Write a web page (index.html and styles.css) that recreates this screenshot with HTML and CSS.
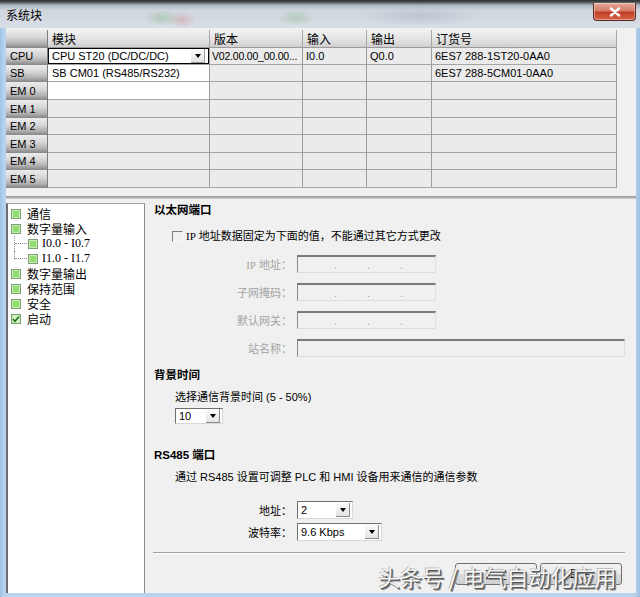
FILE: index.html
```html
<!DOCTYPE html>
<html lang="zh-CN">
<head>
<meta charset="utf-8">
<title>系统块</title>
<link rel="stylesheet" href="styles.css">
</head>
<body>
<div class="window">
  <div class="titlebar">
    <span class="title">系统块</span>
    <div class="close"><svg width="14" height="10" viewBox="0 0 14 10"><path d="M3 1.5 L11 8.5 M11 1.5 L3 8.5" stroke="#fff" stroke-width="2.4" stroke-linecap="round"/></svg></div>
  </div>
  <div class="client">
    <div class="grid-wrap">
      <div class="grid">
        <div class="cell rh"></div><div class="cell ch">模块</div><div class="cell ch">版本</div><div class="cell ch">输入</div><div class="cell ch">输出</div><div class="cell ch">订货号</div>

        <div class="cell rh">CPU</div>
        <div class="cell white combo-cell"><div class="combo"><span class="combo-text">CPU ST20 (DC/DC/DC)</span><span class="drop"><i class="tri"></i></span></div></div>
        <div class="cell narrow">V02.00.00_00.00...</div><div class="cell">I0.0</div><div class="cell">Q0.0</div><div class="cell">6ES7 288-1ST20-0AA0</div>

        <div class="cell rh">SB</div>
        <div class="cell white">SB CM01 (RS485/RS232)</div>
        <div class="cell"></div><div class="cell"></div><div class="cell"></div><div class="cell">6ES7 288-5CM01-0AA0</div>

        <div class="cell rh">EM 0</div>
        <div class="cell white"></div>
        <div class="cell"></div><div class="cell"></div><div class="cell"></div><div class="cell"></div>

        <div class="cell rh">EM 1</div><div class="cell"></div><div class="cell"></div><div class="cell"></div><div class="cell"></div><div class="cell"></div>
        <div class="cell rh">EM 2</div><div class="cell"></div><div class="cell"></div><div class="cell"></div><div class="cell"></div><div class="cell"></div>
        <div class="cell rh">EM 3</div><div class="cell"></div><div class="cell"></div><div class="cell"></div><div class="cell"></div><div class="cell"></div>
        <div class="cell rh">EM 4</div><div class="cell"></div><div class="cell"></div><div class="cell"></div><div class="cell"></div><div class="cell"></div>
        <div class="cell rh">EM 5</div><div class="cell"></div><div class="cell"></div><div class="cell"></div><div class="cell"></div><div class="cell"></div>
      </div>
    </div>
    <div class="splitter"></div>
    <div class="lower">
      <div class="tree">
        <div class="item"><span class="ico"></span><span class="lbl">通信</span></div>
        <div class="item"><span class="ico"></span><span class="lbl">数字量输入</span></div>
        <div class="item sub"><span class="elbow"></span><span class="ico"></span><span class="lbl serif">I0.0 - I0.7</span></div>
        <div class="item sub last"><span class="elbow"></span><span class="ico"></span><span class="lbl serif">I1.0 - I1.7</span></div>
        <div class="item"><span class="ico"></span><span class="lbl">数字量输出</span></div>
        <div class="item"><span class="ico"></span><span class="lbl">保持范围</span></div>
        <div class="item"><span class="ico"></span><span class="lbl">安全</span></div>
        <div class="item"><span class="ico checked"><svg width="8" height="8" viewBox="0 0 8 8"><path d="M1 4 L3 6.3 L7 1.5" stroke="#1f6b1f" stroke-width="1.6" fill="none"/></svg></span><span class="lbl">启动</span></div>
      </div>
      <div class="pane">
        <div class="heading">以太网端口</div>
        <div class="chkrow"><span class="chk"></span><span class="chk-text"><span class="serif">IP</span> 地址数据固定为下面的值，不能通过其它方式更改</span></div>
        <div class="field f-first"><span class="flabel dis"><span class="serif">IP</span> 地址：</span><div class="ibox"><span>.</span><span>.</span><span>.</span></div></div>
        <div class="field"><span class="flabel dis">子网掩码：</span><div class="ibox"><span>.</span><span>.</span><span>.</span></div></div>
        <div class="field"><span class="flabel dis">默认网关：</span><div class="ibox"><span>.</span><span>.</span><span>.</span></div></div>
        <div class="field"><span class="flabel dis">站名称：</span><div class="ibox wide"></div></div>

        <div class="heading h-bg">背景时间</div>
        <div class="indent t-sel">选择通信背景时间 (5 - 50%)</div>
        <div class="sel sel-10 indent"><span class="sel-text">10</span><span class="sbtn"><i class="tri"></i></span></div>

        <div class="heading h-rs">RS485 端口</div>
        <div class="indent t-desc">通过 RS485 设置可调整 PLC 和 HMI 设备用来通信的通信参数</div>
        <div class="field f-addr"><span class="flabel">地址：</span><div class="sel sel-addr"><span class="sel-text">2</span><span class="sbtn"><i class="tri"></i></span></div></div>
        <div class="field f-baud"><span class="flabel">波特率：</span><div class="sel sel-baud"><span class="sel-text">9.6 Kbps</span><span class="sbtn"><i class="tri"></i></span></div></div>

        <div class="sep"></div>
        <div class="buttons">
          <div class="btn">确定</div>
          <div class="btn">取消</div>
        </div>
      </div>
    </div>
  </div>
  <div class="watermark">头条号 / 电气自动化应用</div>
</div>
</body>
</html>
```

FILE: styles.css
```css
html, body {
  margin: 0;
  padding: 0;
}
body {
  font-family: "Liberation Sans", "Noto Sans CJK SC", sans-serif;
  font-size: 11px;
  color: #000;
  background: #a9c8e6;
}
.serif {
  font-family: "Liberation Serif", "Noto Sans CJK SC", serif;
}
.window {
  width: 640px;
  height: 597px;
  position: relative;
  overflow: hidden;
  display: flex;
  flex-direction: column;
  background: linear-gradient(to right, #9fc2e4 0, #b7d3ee 4px, #b7d3ee 634px, #9fc2e4 640px);
}
.titlebar {
  height: 28px;
  flex: none;
  display: flex;
  align-items: flex-start;
  background:
    radial-gradient(ellipse 18px 8px at 162px 18px, rgba(110,170,110,0.35), transparent),
    radial-gradient(ellipse 14px 8px at 182px 20px, rgba(200,110,110,0.30), transparent),
    radial-gradient(ellipse 20px 8px at 296px 18px, rgba(110,170,110,0.30), transparent),
    radial-gradient(ellipse 60px 10px at 420px 16px, rgba(120,140,170,0.25), transparent),
    linear-gradient(to bottom, #2e2e2e 0, #4a4e52 2px, #aab3bc 5px, #cfd6dd 10px, #d8dee5 100%);
}
.title {
  margin: 7px 0 0 6px;
  font-size: 12px;
  line-height: 16px;
  font-family: "Noto Sans CJK SC", sans-serif;
}
.close {
  margin: 3px 4px 0 auto;
  width: 43px;
  height: 18px;
  box-sizing: border-box;
  border: 1px solid #5a2a22;
  border-top: none;
  border-radius: 0 0 4px 4px;
  background: linear-gradient(to bottom, #e9a99b 0, #d47a68 45%, #c33e25 55%, #d5664b 100%);
  display: flex;
  align-items: center;
  justify-content: center;
  box-shadow: inset 0 0 0 1px rgba(255,255,255,0.35);
}
.client {
  flex: 1;
  min-height: 0;
  margin: 0 4px 4px 6px;
  background: #f0f0f0;
  display: flex;
  flex-direction: column;
}
.grid-wrap {
  padding: 2px 0 8px 0;
}
.grid {
  display: grid;
  width: 611px;
  grid-template-columns: 42px 162px 93px 64px 65px 185px;
  grid-template-rows: 18px 17px 17px 18px 18px 17px 18px 17px 18px;
  background: #ebebeb;
}
.cell {
  box-sizing: border-box;
  border-right: 1px solid #9c9c9c;
  border-bottom: 1px solid #a4a4a4;
  background: #ebebeb;
  padding-left: 3px;
  display: flex;
  align-items: center;
  white-space: nowrap;
  overflow: hidden;
  font-size: 11px;
}
.cell.narrow {
  font-size: 10.5px;
  letter-spacing: -0.2px;
  padding-left: 2px;
}
.ch {
  background: linear-gradient(to bottom, #f2f2f2 0, #e2e2e2 60%, #cfcfcf 100%);
  border-right: 1px solid #a8a8a8;
  border-bottom: 1px solid #9a9a9a;
  font-family: "Noto Sans CJK SC", sans-serif;
  font-size: 12px;
  padding-left: 4px;
}
.rh {
  background: linear-gradient(to bottom, #ececec 0, #d6d6d6 45%, #b0b0b0 80%, #8f8f8f 100%);
  border-right: 1px solid #7d7d7d;
  border-bottom: 1px solid #8a8a8a;
  padding-left: 4px;
  font-size: 11px;
}
.white {
  background: #fff;
  padding-left: 4px;
}
.combo-cell {
  padding: 0;
}
.combo {
  flex: 1;
  height: 100%;
  box-sizing: border-box;
  border: 1px solid #000;
  display: flex;
  align-items: center;
  padding-left: 3px;
}
.combo-text {
  flex: 1;
}
.drop {
  width: 13px;
  height: 13px;
  margin-right: 3px;
  display: flex;
  align-items: center;
  justify-content: center;
  background: linear-gradient(#fbfbfb, #e2e2e2);
  border-right: 1px solid #9a9a9a;
  border-bottom: 1px solid #9a9a9a;
}
.tri {
  display: block;
  width: 0;
  height: 0;
  border-left: 3.5px solid transparent;
  border-right: 3.5px solid transparent;
  border-top: 4px solid #000;
}
.splitter {
  height: 3px;
  flex: none;
  background: linear-gradient(to bottom, #9a9a9a, #b8b8b8 66%, #d8d8d8);
}
.lower {
  flex: 1;
  min-height: 0;
  display: flex;
  padding-top: 4px;
}
.tree {
  width: 139px;
  flex: none;
  box-sizing: border-box;
  background: #fff;
  border-left: 2px solid #6e6e6e;
  border-top: 1px solid #a0a0a0;
  border-right: 1px solid #8c8c8c;
  padding: 2px 0 0 3px;
  font-family: "Noto Sans CJK SC", sans-serif;
  font-size: 12px;
}
.item {
  height: 15px;
  display: flex;
  align-items: center;
  white-space: nowrap;
}
.ico {
  width: 10px;
  height: 10px;
  flex: none;
  box-sizing: border-box;
  border: 1px solid #7f9f78;
  background: #93dc72;
  box-shadow: inset 0 0 0 1px #c4efb0;
  display: flex;
  align-items: center;
  justify-content: center;
}
.ico.checked {
  background: #d7f3c8;
}
.lbl {
  margin-left: 6px;
  line-height: 15px;
  height: 15px;
  overflow: hidden;
}
.sub .lbl {
  margin-left: 4px;
  font-size: 12px;
}
.elbow {
  position: relative;
  width: 13px;
  height: 15px;
  margin-left: 3px;
  margin-right: 1px;
  border-left: 1px dotted #8c8c8c;
  align-self: flex-start;
  box-sizing: border-box;
}
.elbow::after {
  content: "";
  position: absolute;
  left: 0;
  top: 7px;
  width: 12px;
  border-top: 1px dotted #8c8c8c;
}
.last .elbow {
  height: 8px;
}
.pane {
  flex: 1;
  min-width: 0;
  padding-left: 9px;
  display: flex;
  flex-direction: column;
  align-items: flex-start;
  font-family: "Liberation Sans", "Noto Sans CJK SC", sans-serif;
  font-size: 11px;
}
.heading {
  font-weight: bold;
  line-height: 14px;
  font-size: 11.5px;
}
.chkrow {
  margin-top: 12px;
  margin-left: 18px;
  display: flex;
  align-items: center;
  line-height: 14px;
  white-space: nowrap;
}
.chk {
  width: 11px;
  height: 11px;
  box-sizing: border-box;
  border-top: 1px solid #7c7c7c;
  border-left: 1px solid #7c7c7c;
  border-right: 1px solid #fafafa;
  border-bottom: 1px solid #fafafa;
  background: #f0f0f0;
  margin-right: 3px;
}
.chk-text .serif {
  font-size: 11px;
}
.field {
  display: flex;
  align-items: center;
  height: 18px;
  margin-top: 10px;
  white-space: nowrap;
}
.f-first {
  margin-top: 12px;
}
.flabel {
  width: 138px;
  margin-right: 5px;
  text-align: right;
}
.dis {
  color: #a3a3a3;
}
.ibox {
  width: 139px;
  height: 18px;
  box-sizing: border-box;
  border-top: 2px solid #7a7a7a;
  border-left: 1px solid #8a8a8a;
  border-right: 1px solid #dedede;
  border-bottom: 1px solid #dedede;
  background: #f0f0f0;
  display: flex;
  align-items: center;
  padding-left: 36px;
  color: #9a9a9a;
}
.ibox span {
  width: 33px;
}
.ibox.wide {
  width: 328px;
}
.h-bg {
  margin-top: 11px;
}
.indent {
  margin-left: 21px;
}
.t-sel {
  margin-top: 8px;
  line-height: 14px;
}
.sel {
  height: 18px;
  box-sizing: border-box;
  background: #fff;
  border-top: 1px solid #6f6f6f;
  border-left: 1px solid #6f6f6f;
  border-right: 1px solid #d8d8d8;
  border-bottom: 1px solid #d8d8d8;
  display: flex;
  align-items: center;
  padding-left: 3px;
}
.sel-text {
  flex: 1;
}
.sbtn {
  width: 13px;
  height: 13px;
  margin-right: 2px;
  display: flex;
  align-items: center;
  justify-content: center;
  background: linear-gradient(#fbfbfb, #e4e4e4);
  border-right: 1px solid #8a8a8a;
  border-bottom: 1px solid #8a8a8a;
}
.sel-10 {
  margin-top: 4px;
  width: 48px;
  height: 16px;
}
.h-rs {
  margin-top: 24px;
}
.t-desc {
  margin-top: 8px;
  line-height: 14px;
  white-space: nowrap;
}
.f-addr {
  margin-top: 17px;
}
.f-baud {
  margin-top: 4px;
}
.sel-addr {
  width: 56px;
}
.sel-baud {
  width: 85px;
}
.sep {
  margin-top: 11px;
  margin-left: -1px;
  width: 472px;
  height: 0;
  border-top: 1px solid #a0a0a0;
  border-bottom: 1px solid #ffffff;
}
.buttons {
  margin-top: 9px;
  align-self: stretch;
  display: flex;
  justify-content: flex-end;
  gap: 3px;
  padding-right: 14px;
}
.btn {
  width: 82px;
  height: 22px;
  box-sizing: border-box;
  border: 1px solid #707070;
  border-radius: 3px;
  background: linear-gradient(to bottom, #f2f2f2 0, #ebebeb 50%, #dddddd 51%, #cfcfcf 100%);
  display: flex;
  align-items: center;
  justify-content: center;
  font-family: "Noto Sans CJK SC", sans-serif;
  font-size: 11px;
}
.watermark {
  position: absolute;
  left: 378px;
  top: 562px;
  font-family: "Noto Sans CJK SC", sans-serif;
  font-size: 22px;
  line-height: 28px;
  color: rgba(255,255,255,0.92);
  text-shadow: 1px 1px 0 #555, 2px 2px 0 #8a8a8a, -1px -1px 0 #c0c0c0;
  white-space: nowrap;
  pointer-events: none;
}
```
